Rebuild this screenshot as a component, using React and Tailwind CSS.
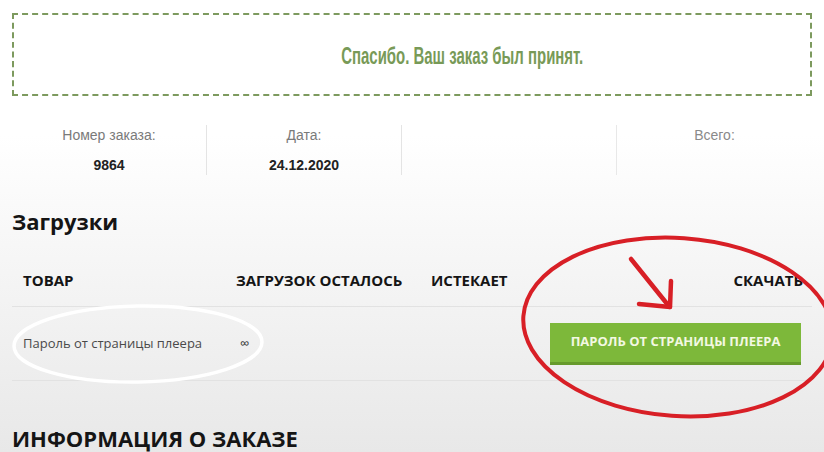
import React from 'react';

const lib = { fontFamily: '"Liberation Sans", Arial, sans-serif' };

const Annotations = () => (
  <svg className="absolute inset-0 pointer-events-none" width="824" height="452" viewBox="0 0 824 452">
    {/* white ellipse round the product */}
    <ellipse cx="138" cy="344" rx="124" ry="38" transform="rotate(-1 138 344)" fill="none" stroke="#ffffff" strokeWidth="3.5" />
    {/* red ellipse round the button */}
    <ellipse cx="678" cy="327" rx="155" ry="89" transform="rotate(4 678 327)" fill="none" stroke="#d81f26" strokeWidth="4" />
    {/* red arrow */}
    <g stroke="#d81f26" strokeWidth="4.5" strokeLinecap="round" fill="none">
      <path d="M631 259 L668 305" />
      <path d="M671 281 L670 307" />
      <path d="M639 304 L670 307" />
    </g>
  </svg>
);

const DetailCell = ({ label, value, className = '' }) => (
  <div className={`flex flex-col items-center justify-start gap-[12px] ${className}`}>
    <span className="text-[14px] leading-[18px] text-[#7a7a7a]" style={lib}>{label}</span>
    <span className="text-[14px] leading-[18px] font-bold text-[#222]" style={lib}>{value}</span>
  </div>
);

export default function App() {
  return (
    <div
      className="relative w-[824px] h-[452px] overflow-hidden bg-gradient-to-b from-white from-30% to-[#e8e8e8]"
      style={{ fontFamily: '"Open Sans", "Liberation Sans", sans-serif' }}
    >
      <div className="px-[12px] pt-[13px]">
        {/* Notice */}
        <div className="h-[83px] pl-[100px] border-2 border-dashed border-[#7d9a5e] flex items-center justify-center">
          <p className="inline-block mt-[3px] text-[23px] font-bold text-[#789a57] scale-x-[0.65] whitespace-nowrap" style={lib}>
            Спасибо. Ваш заказ был принят.
          </p>
        </div>

        {/* Order overview */}
        <div className="mt-[33px] grid grid-cols-[195px_195px_215px_1fr]">
          <DetailCell label="Номер заказа:" value="9864" className="border-r border-[#e4e4e4] h-[50px] -mt-[4px] pt-[1px]" />
          <DetailCell label="Дата:" value="24.12.2020" className="border-r border-[#e4e4e4] h-[50px] -mt-[4px] pt-[1px]" />
          <div className="border-r border-[#e8e8e8] h-[50px] -mt-[4px]" />
          <div className="flex flex-col items-center -mt-[3px]">
            <span className="text-[14px] leading-[18px] text-[#8a8a8a]" style={lib}>Всего:</span>
          </div>
        </div>

        {/* Downloads */}
        <h2 className="mt-[31px] text-[22px] leading-[30px] font-bold text-[#151515]">Загрузки</h2>

        <div className="mt-[19px] grid grid-cols-[213px_195px_1fr_auto]">
          <div className="px-[11px] h-[52px] flex items-center text-[15px] font-bold text-[#151515] border-b border-[#e2e2e2]">ТОВАР</div>
          <div className="px-[11px] h-[52px] flex items-center text-[15px] font-bold text-[#151515] border-b border-[#e2e2e2]">ЗАГРУЗОК ОСТАЛОСЬ</div>
          <div className="px-[11px] h-[52px] flex items-center text-[15px] font-bold text-[#151515] border-b border-[#e2e2e2]">ИСТЕКАЕТ</div>
          <div className="pl-[11px] pr-[9px] h-[52px] flex items-center justify-end text-[15px] font-bold text-[#151515] border-b border-[#e2e2e2]">СКАЧАТЬ</div>

          <div className="px-[11px] h-[74px] flex items-center text-[13px] text-[#4a4a4a] border-b border-[#e2e2e2]">Пароль от страницы плеера</div>
          <div className="px-[15px] h-[74px] flex items-center text-[13px] text-[#333] border-b border-[#e2e2e2]">∞</div>
          <div className="h-[74px] border-b border-[#e2e2e2]" />
          <div className="pr-[11px] h-[74px] flex items-center justify-end border-b border-[#e2e2e2]">
            <button className="w-[251px] h-[42px] bg-[#7db83a] border-b-[3px] border-[#679a2c] text-[13px] font-bold text-[#f3f8e2] uppercase">
              Пароль от страницы плеера
            </button>
          </div>
        </div>

        <h2 className="mt-[42px] text-[22px] leading-[30px] font-bold text-[#151515]">ИНФОРМАЦИЯ О ЗАКАЗЕ</h2>
      </div>

      <Annotations />
    </div>
  );
}
